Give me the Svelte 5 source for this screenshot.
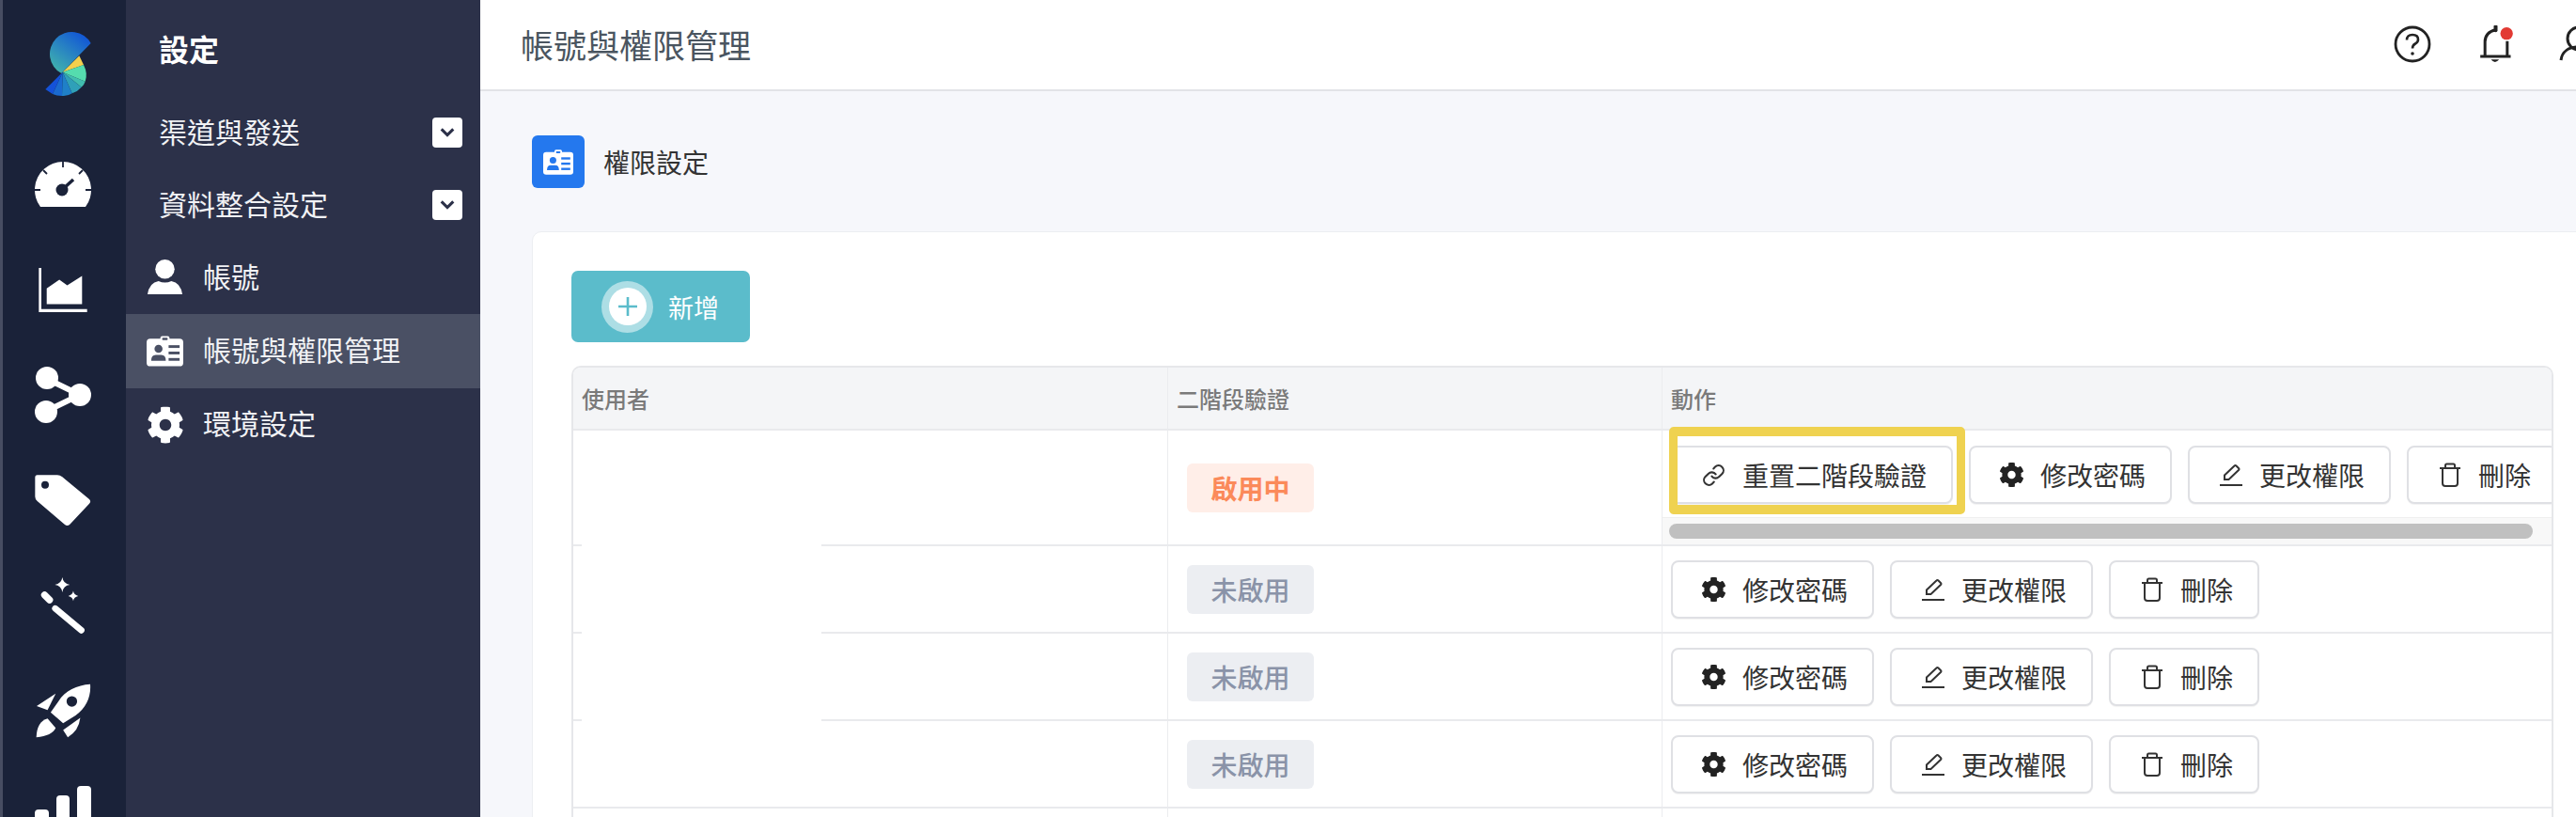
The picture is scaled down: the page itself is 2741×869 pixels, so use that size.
<script>
  const navItems = [
    { label: '渠道與發送', chevron: true },
    { label: '資料整合設定', chevron: true },
    { label: '帳號', icon: 'user' },
    { label: '帳號與權限管理', icon: 'card', active: true },
    { label: '環境設定', icon: 'gear' }
  ];
  const rows = [
    { state: '未啟用' },
    { state: '未啟用' },
    { state: '未啟用' }
  ];
  const gearPath = 'M487.4 315.7l-42.6-24.6c4.3-23.2 4.3-47 0-70.2l42.6-24.6c4.9-2.8 7.1-8.6 5.5-14-11.1-35.6-30-67.8-54.7-94.6-3.8-4.1-10-5.1-14.8-2.3L380.8 110c-17.9-15.4-38.5-27.3-60.8-35.1V25.8c0-5.6-3.9-10.5-9.4-11.7-36.7-8.2-74.3-7.8-109.2 0-5.5 1.2-9.4 6.1-9.4 11.7V75c-22.2 7.9-42.8 19.8-60.8 35.1L88.7 85.5c-4.9-2.8-11-1.9-14.8 2.3-24.7 26.7-43.6 58.9-54.7 94.6-1.7 5.4.6 11.2 5.5 14L67.3 221c-4.3 23.2-4.3 47 0 70.2l-42.6 24.6c-4.9 2.8-7.1 8.6-5.5 14 11.1 35.6 30 67.8 54.7 94.6 3.8 4.1 10 5.1 14.8 2.3l42.6-24.6c17.9 15.4 38.5 27.3 60.8 35.1v49.2c0 5.6 3.9 10.5 9.4 11.7 36.7 8.2 74.3 7.8 109.2 0 5.5-1.2 9.4-6.1 9.4-11.7v-49.2c22.2-7.9 42.8-19.8 60.8-35.1l42.6 24.6c4.9 2.8 11 1.9 14.8-2.3 24.7-26.7 43.6-58.9 54.7-94.6 1.5-5.5-.7-11.3-5.6-14.1zM256 336c-44.1 0-80-35.9-80-80s35.9-80 80-80 80 35.9 80 80-35.9 80-80 80z';
</script>

{#snippet idCard(cls)}
  <svg class={cls} viewBox="0 0 40 33">
    <path class="card-body" d="M4 3H15V2Q15 0 17 0H23Q25 0 25 2V3H36Q40 3 40 7V29Q40 33 36 33H4Q0 33 0 29V7Q0 3 4 3Z" />
    <rect class="card-hole" x="17" y="2" width="6" height="2.5" rx="1" />
    <circle class="card-hole" cx="13" cy="14" r="4.4" />
    <path class="card-hole" d="M5 27Q5 20.5 10 20.5H16Q21 20.5 21 27Z" />
    <rect class="card-hole" x="24" y="10" width="12" height="3" />
    <rect class="card-hole" x="24" y="17" width="12" height="3" />
    <rect class="card-hole" x="24" y="24" width="12" height="3" />
  </svg>
{/snippet}

{#snippet gear(cls)}
  <svg class={cls} viewBox="0 0 512 512"><path d={gearPath} fill="currentColor" /></svg>
{/snippet}

{#snippet pwdBtn()}
  <button class="btn" type="button"><span class="btn-ico">{@render gear('gear-ico')}</span><span>修改密碼</span></button>
{/snippet}

{#snippet permBtn()}
  <button class="btn" type="button"><span class="btn-ico"><svg class="line-ico" viewBox="0 0 26 26"><path d="M6 18V13.5L16.5 3.5Q17.5 2.5 18.5 3.5L21 6Q22 7 21 8L10.5 18Z" /><path d="M1 24H25" /></svg></span><span>更改權限</span></button>
{/snippet}

{#snippet delBtn()}
  <button class="btn" type="button"><span class="btn-ico"><svg class="line-ico" viewBox="0 0 26 26"><path d="M2 6H24" /><path d="M8 6V3Q8 1.5 9.500 1.500H16.500Q18 1.500 18 3V6" /><path d="M5 6V22Q5 25 8 25H18Q21 25 21 22V6" /></svg></span><span>刪除</span></button>
{/snippet}

<div class="app">
  <nav class="rail">
    <div class="logo-slot">
      <svg class="logo" viewBox="0 0 270 300">
        <defs>
          <linearGradient id="lg" x1="0.85" y1="0.1" x2="0.2" y2="0.95">
            <stop offset="0" stop-color="#1257d6" />
            <stop offset="1" stop-color="#3fb0ae" />
          </linearGradient>
        </defs>
        <path d="M170 78A70 70 0 1 0 76 174Z" fill="url(#lg)" />
        <path d="M80 170L133 118L147 147Z" fill="#f3d04d" />
        <path d="M80 170L147 147Q161 175 152 200Z" fill="#55dcae" />
        <path d="M80 170L152 200Q148 212 140 218Z" fill="#41bdaf" />
        <path d="M80 170L140 218Q128 232 110 238Z" fill="#2fa0b8" />
        <path d="M80 170L110 238Q95 248 78 246Z" fill="#1f80c8" />
        <path d="M80 170L78 246Q60 246 48 240Z" fill="#1a6ad0" />
        <path d="M80 170L48 240L25 225Z" fill="#1452d8" />
      </svg>
    </div>
    <div class="slot">
      <svg class="ico-gauge" viewBox="0 0 60 48">
        <path d="M6 48A30 30 0 1 1 54 48Z" fill="#fff" />
        <path d="M30 0V6M9 9L13 13M51 9L47 13M0 30H6M54 30H60" stroke="#1a2239" stroke-width="1.800" />
        <circle cx="29" cy="30" r="6.500" fill="#1a2239" />
        <path d="M30 29L41 19" stroke="#1a2239" stroke-width="3.500" />
      </svg>
    </div>
    <div class="slot">
      <svg class="ico-chart" viewBox="0 0 153 140">
        <path d="M0 0H8V130H153V140H0Z" fill="#fff" />
        <path d="M25 115V65L65 37L90 55L137 25V115Z" fill="#fff" />
      </svg>
    </div>
    <div class="slot">
      <svg class="ico-share" viewBox="0 0 60 60">
        <path d="M13 13L48 30L13 47" fill="none" stroke="#fff" stroke-width="6" />
        <circle cx="13" cy="12" r="12" fill="#fff" />
        <circle cx="48" cy="30" r="12" fill="#fff" />
        <circle cx="12" cy="48" r="12" fill="#fff" />
      </svg>
    </div>
    <div class="slot">
      <svg class="ico-tag" viewBox="0 0 180 165">
        <path fill="#fff" fill-rule="evenodd" d="M8 1H72Q80 1 88 7L174 78Q181 85 174 92L112 158Q104 166 95 158L8 84Q1 78 1 70V9Q1 1 8 1ZM33 20A12 12 0 1 0 33 44A12 12 0 1 0 33 20Z" />
      </svg>
    </div>
    <div class="slot">
      <svg class="ico-wand" viewBox="130 545 150 190">
        <path d="M203 548Q206 569 227 572Q206 575 203 596Q200 575 179 572Q200 569 203 548ZM238 592Q240 605 254 608Q240 611 238 624Q236 611 222 608Q236 605 238 592Z" fill="#fff" />
        <path d="M146 605L162 621" stroke="#fff" stroke-width="22" stroke-linecap="round" />
        <path d="M180 648L264 718" stroke="#fff" stroke-width="20" stroke-linecap="round" />
      </svg>
    </div>
    <div class="slot">
      <svg class="ico-rocket" viewBox="112 883 178 174">
        <path fill="#fff" fill-rule="evenodd" d="M287 885C245 888 205 905 185 940L160 975L200 1010L240 985C275 960 290 925 287 885ZM228 923A17 17 0 1 0 228 957A17 17 0 1 0 228 923Z" />
        <path d="M176 915L115 955L150 968Z" fill="#fff" />
        <path d="M255 993L200 1032L215 1055Q250 1035 255 993Z" fill="#fff" />
        <path d="M114 1055Q116 1005 150 995L176 1025Q165 1050 114 1055Z" fill="#fff" />
      </svg>
    </div>
    <div class="slot">
      <svg class="ico-bars" viewBox="0 0 60 64">
        <rect x="0" y="25" width="15" height="39" rx="4" fill="#fff" />
        <rect x="23" y="10" width="14" height="54" rx="4" fill="#fff" />
        <rect x="45" y="0" width="15" height="64" rx="4" fill="#fff" />
      </svg>
    </div>
  </nav>

  <aside class="sub">
    <h2 class="sub-title">設定</h2>
    {#each navItems as item}
      <div class="sub-item" class:active={item.active} class:iconed={item.icon}>
        {#if item.icon === 'user'}
          <svg class="sub-ico" viewBox="0 0 40 40">
            <circle cx="20" cy="10.500" r="10.500" fill="#fff" />
            <path d="M1 38Q3 25 13 23.500Q20 27 27 23.500Q37 25 39 38Z" fill="#fff" />
          </svg>
        {:else if item.icon === 'card'}
          {@render idCard('sub-ico dark-card')}
        {:else if item.icon === 'gear'}
          {@render gear('sub-ico white-gear')}
        {/if}
        <span class="sub-label">{item.label}</span>
        {#if item.chevron}
          <span class="chev">
            <svg viewBox="0 0 20 12"><path d="M3 2L10 9L17 2" fill="none" stroke="#2c3149" stroke-width="3.400" /></svg>
          </span>
        {/if}
      </div>
    {/each}
  </aside>

  <div class="content">
    <header class="top">
      <h1>帳號與權限管理</h1>
      <div class="top-icons">
        <svg class="ico-help" viewBox="0 0 40 40">
          <circle cx="20" cy="20" r="18" fill="none" stroke="#222" stroke-width="2.800" />
          <path d="M14 15.500Q14 10 20 10Q26 10 26 15Q26 18 23 19.500Q20 21 20 24.500" fill="none" stroke="#222" stroke-width="2.600" />
          <circle cx="20" cy="30" r="1.800" fill="#222" />
        </svg>
        <svg class="ico-bell" viewBox="585 78 110 120">
          <path d="M591 177H688M606 177V130Q606 100 640 92M677 177V128" fill="none" stroke="#222" stroke-width="9" />
          <path d="M640 82V94" stroke="#222" stroke-width="12" stroke-linecap="round" />
          <path d="M625 187H651Q638 203 625 187Z" fill="#222" />
          <circle cx="675" cy="104" r="20" fill="#e23a33" />
        </svg>
        <svg class="ico-user" viewBox="0 0 42 40">
          <circle cx="23" cy="14" r="12" fill="none" stroke="#222" stroke-width="3" />
          <path d="M4 37C5 28 12 23 23 23C34 23 41 28 42 37" fill="none" stroke="#222" stroke-width="3" />
        </svg>
      </div>
    </header>

    <main class="main">
      <div class="section-head">
        <span class="blue-box">{@render idCard('blue-card')}</span>
        <span class="section-title">權限設定</span>
      </div>

      <section class="panel">
        <button class="add" type="button">
          <span class="add-ring">
            <span class="add-dot">
              <svg viewBox="0 0 24 24"><path d="M12 2V22M2 12H22" stroke="#5bbccb" stroke-width="2.600" /></svg>
            </span>
          </span>
          <span>新增</span>
        </button>

        <div class="table">
          <div class="row head">
            <div class="cell">使用者</div>
            <div class="cell">二階段驗證</div>
            <div class="cell">動作</div>
          </div>

          <div class="row first">
            <div class="cell user"><span class="mask"></span></div>
            <div class="cell state"><span class="badge on">啟用中</span></div>
            <div class="cell actions wide">
              <div class="btn-line">
                <button class="btn" type="button"><span class="btn-ico"><svg class="link-ico" viewBox="0 0 24 24"><path d="M10 13a5 5 0 0 0 7.540.540l3-3a5 5 0 0 0-7.070-7.070l-1.720 1.710" /><path d="M14 11a5 5 0 0 0-7.540-.540l-3 3a5 5 0 0 0 7.070 7.070l1.710-1.710" /></svg></span><span>重置二階段驗證</span></button>
                {@render pwdBtn()}
                {@render permBtn()}
                {@render delBtn()}
              </div>
              <div class="scroll-track"><div class="scroll-thumb"></div></div>
              <div class="highlight"></div>
            </div>
          </div>

          {#each rows as r, i}
            <div class="row plain">
              <div class="cell user">{#if i < rows.length - 1}<span class="mask"></span>{/if}</div>
              <div class="cell state"><span class="badge off">{r.state}</span></div>
              <div class="cell actions">
                <div class="btn-line">
                  {@render pwdBtn()}
                  {@render permBtn()}
                  {@render delBtn()}
                </div>
              </div>
            </div>
          {/each}

          <div class="row plain">
            <div class="cell"></div>
            <div class="cell"></div>
            <div class="cell"></div>
          </div>
        </div>
      </section>
    </main>
  </div>
</div>

<style>
  :global(body) {
    margin: 0;
    background: #f6f7fb;
  }
  * {
    box-sizing: border-box;
  }
  .app {
    display: flex;
    width: 2741px;
    height: 869px;
    overflow: hidden;
    font-family: "Noto Sans CJK TC", "Noto Sans", sans-serif;
    color: #333;
  }

  /* icon rail */
  .rail {
    flex: 0 0 134px;
    height: 869px;
    background: #1a2239;
    border-left: 3px solid #474d62;
    margin: 0;
    display: flex;
    flex-direction: column;
    align-items: center;
    padding-right: 3px;
  }
  .logo-slot {
    flex: 0 0 140px;
    width: 100%;
    padding: 20px 0 0 37px;
  }
  .logo {
    display: block;
    width: 90px;
    height: 100px;
  }
  .slot {
    flex: 0 0 112px;
    width: 100%;
    display: flex;
    align-items: center;
    justify-content: center;
  }
  .ico-gauge { width: 60px; height: 48px; }
  .ico-chart { width: 52px; height: 47px; }
  .ico-share { width: 60px; height: 60px; }
  .ico-tag { width: 60px; height: 55px; }
  .ico-wand { width: 50px; height: 63px; }
  .ico-rocket { width: 59px; height: 58px; }
  .ico-bars { width: 60px; height: 64px; }

  /* second level nav */
  .sub {
    flex: 0 0 377px;
    height: 869px;
    background: #2c3149;
    color: #f1f2f5;
  }
  .sub-title {
    margin: 0;
    height: 103px;
    padding: 0 0 2px 35px;
    display: flex;
    align-items: center;
    font-size: 32px;
    font-weight: 700;
    color: #fff;
  }
  .sub-item {
    height: 77px;
    display: flex;
    align-items: center;
    padding-left: 35px;
    font-size: 30px;
    position: relative;
  }
  .sub-label {
    padding-bottom: 5px;
  }
  .sub-item.iconed {
    padding-left: 22px;
  }
  .sub-item.active {
    background: #4a5064;
    height: 79px;
  }
  .sub-ico {
    width: 39px;
    height: 39px;
    margin-right: 21px;
    flex: none;
  }
  .white-gear {
    color: #fff;
    width: 40px;
    height: 40px;
    margin-right: 20px;
  }
  .chev {
    position: absolute;
    right: 19px;
    top: 22px;
    width: 32px;
    height: 32px;
    background: #fff;
    border-radius: 4px;
    display: flex;
    align-items: center;
    justify-content: center;
  }
  .chev svg {
    width: 18px;
    height: 12px;
  }
  .card-body { fill: #fff; }
  .dark-card .card-hole { fill: #4a5064; }
  .blue-card .card-hole { fill: #2478ee; }

  /* header */
  .content {
    flex: 1 1 auto;
    min-width: 0;
    display: flex;
    flex-direction: column;
  }
  .top {
    flex: 0 0 97px;
    background: #fff;
    border-bottom: 2px solid #e2e3e7;
    display: flex;
    align-items: center;
    justify-content: space-between;
    padding: 0 0 2px 43px;
  }
  .top h1 {
    margin: 0;
    font-size: 35px;
    font-weight: 400;
    color: #4a5560;
  }
  .top-icons {
    display: flex;
    align-items: center;
    margin-right: -22px;
  }
  .ico-help {
    width: 40px;
    height: 40px;
    margin-right: 50px;
  }
  .ico-bell {
    width: 37px;
    height: 40px;
    margin-right: 47px;
  }
  .ico-user {
    width: 42px;
    height: 40px;
  }

  /* main */
  .main {
    flex: 1 1 auto;
    min-height: 0;
    background: #f6f7fb;
    padding: 47px 0 0 55px;
  }
  .section-head {
    display: flex;
    align-items: center;
    height: 56px;
    margin-bottom: 46px;
  }
  .blue-box {
    width: 56px;
    height: 56px;
    border-radius: 6px;
    background: #2478ee;
    display: flex;
    align-items: center;
    justify-content: center;
    margin-right: 20px;
  }
  .blue-card {
    width: 32px;
    height: 27px;
  }
  .section-title {
    font-size: 28px;
    color: #333;
  }
  .panel {
    width: 2193px;
    height: 640px;
    background: #fff;
    border: 1px solid #eceef2;
    border-radius: 10px;
    padding: 41px 0 0 41px;
  }
  .add {
    width: 190px;
    height: 76px;
    border: 0;
    border-radius: 7px;
    background: #5bbccb;
    color: #fff;
    font: inherit;
    font-size: 27px;
    display: flex;
    align-items: center;
    padding: 0 0 0 32px;
    gap: 16px;
    margin-bottom: 25px;
  }
  .add-ring {
    width: 55px;
    height: 55px;
    border-radius: 50%;
    background: rgba(255, 255, 255, 0.5);
    display: flex;
    align-items: center;
    justify-content: center;
  }
  .add-dot {
    width: 40px;
    height: 40px;
    border-radius: 50%;
    background: #fff;
    display: flex;
    align-items: center;
    justify-content: center;
  }
  .add-dot svg {
    width: 24px;
    height: 24px;
  }

  /* table */
  .table {
    width: 2109px;
    border: 2px solid #e6e7ea;
    border-bottom: 0;
    border-radius: 10px 10px 0 0;
  }
  .row {
    display: grid;
    grid-template-columns: 633px 526px 1fr;
    border-bottom: 2px solid #e9eaed;
    height: 93px;
  }
  .row.head {
    height: 67px;
    background: #f4f5f7;
    border-radius: 8px 8px 0 0;
    font-size: 24px;
    font-weight: 500;
    color: #7a7a7a;
  }
  .row.head .cell {
    display: flex;
    align-items: center;
    padding-left: 9px;
  }
  .row.first {
    height: 123px;
  }
  .cell {
    border-right: 1px solid #ebecef;
    position: relative;
    min-width: 0;
  }
  .cell:last-child {
    border-right: 0;
  }
  .mask {
    position: absolute;
    left: 9px;
    width: 255px;
    bottom: -4px;
    height: 8px;
    background: #fff;
  }
  .state {
    display: flex;
    align-items: center;
    padding-left: 20px;
  }
  .first .state {
    align-items: flex-start;
    padding-top: 35px;
  }
  .badge {
    width: 135px;
    height: 52px;
    border-radius: 6px;
    display: flex;
    align-items: center;
    justify-content: center;
    font-size: 28px;
    font-weight: 500;
  }
  .badge.on {
    background: #ffeee8;
    color: #fb8a5a;
    font-weight: 700;
  }
  .badge.off {
    background: #eceef2;
    color: #8a93a8;
  }
  .actions {
    padding: 15px 0 0 9px;
  }
  .actions.wide {
    padding-top: 16px;
  }
  .btn-line {
    display: flex;
    gap: 17px;
    overflow: hidden;
    height: 64px;
  }
  .btn {
    flex: none;
    height: 62px;
    padding: 0 26px 0 30px;
    display: flex;
    align-items: center;
    border: 2px solid #dfe0e4;
    border-radius: 8px;
    background: #fff;
    box-shadow: 0 1px 1px rgba(0, 0, 0, 0.05);
    color: #333;
    font: inherit;
    font-size: 28px;
    white-space: nowrap;
  }
  .btn-ico {
    width: 27px;
    margin-right: 17px;
    display: flex;
    align-items: center;
    justify-content: center;
    flex: none;
  }
  .gear-ico {
    width: 28px;
    height: 28px;
    color: #222;
  }
  .line-ico {
    width: 26px;
    height: 26px;
    fill: none;
    stroke: #333;
    stroke-width: 2;
  }
  .link-ico {
    width: 25px;
    height: 25px;
    fill: none;
    stroke: #333;
    stroke-width: 2;
    stroke-linecap: round;
  }
  .scroll-track {
    position: absolute;
    left: 0;
    right: 0;
    bottom: 0;
    height: 29px;
    background: #f8f8f8;
    border-top: 1px solid #efefef;
    padding: 6px 20px 0 7px;
  }
  .scroll-thumb {
    height: 16px;
    border-radius: 8px;
    background: #c0c0c0;
  }
  .highlight {
    position: absolute;
    left: 7px;
    top: -4px;
    width: 315px;
    height: 93px;
    border: solid #efd250;
    border-width: 10px 9px;
    border-radius: 5px;
  }
</style>
